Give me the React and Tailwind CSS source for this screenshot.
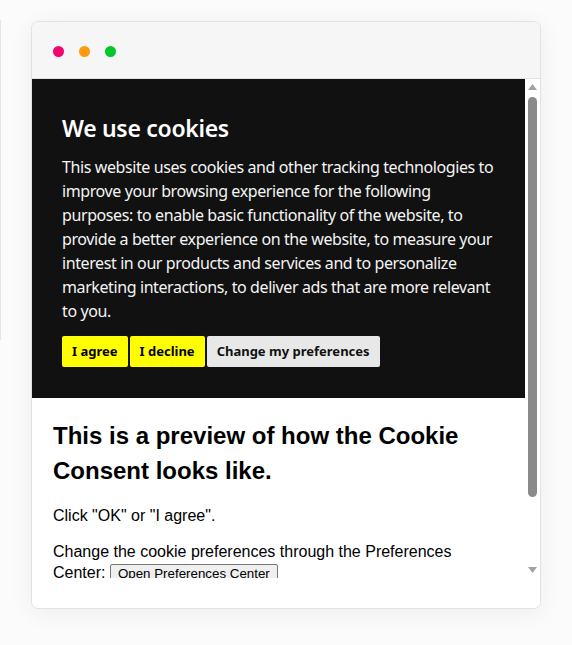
import React from "react";

export default function App() {
  return (
    <div className="w-[572px] h-[645px] bg-[#fbfbfb] relative overflow-hidden">
      <div className="absolute left-0 top-[20px] h-[320px] w-px bg-[#e4e4e4]" />
      <div className="pt-[21px] pl-[31px]">
        <div className="w-[510px] h-[588px] bg-white border border-[#e2e2e2] rounded-[7px] shadow-[0_4px_24px_rgba(0,0,0,0.06)] overflow-hidden flex flex-col">
          <div className="h-[57px] bg-[#f6f6f6] border-b border-[#e0e0e0] flex items-center gap-[15px] pl-[21px] pt-[3px] shrink-0">
            <span className="w-[11px] h-[11px] rounded-full bg-[#f0066c]" />
            <span className="w-[11px] h-[11px] rounded-full bg-[#ff9a10]" />
            <span className="w-[11px] h-[11px] rounded-full bg-[#00c82a]" />
          </div>
          <div className="flex h-[499px] shrink-0">
            <div className="w-[493px] overflow-hidden">
              <div className="bg-[#111111] text-white px-[30px] pt-[30px] pb-[31px]" style={{ fontFamily: '"Noto Sans", sans-serif' }}>
                <h1 className="text-[23px] leading-[38px] font-semibold tracking-[-0.3px] mb-[8px]">We use cookies</h1>
                <p className="text-[16px] leading-[24px] tracking-[-0.4px] text-[#f4f4f4]">
                  This website uses cookies and other tracking technologies to improve your browsing experience for the following purposes: to enable basic functionality of the website, to provide a better experience on the website, to measure your interest in our products and services and to personalize marketing interactions, to deliver ads that are more relevant to you.
                </p>
                <div className="flex gap-[2px] mt-[13px]">
                  <button className="h-[31px] px-[10px] bg-[#ffff00] text-black text-[13px] font-bold rounded-[2px]">I agree</button>
                  <button className="h-[31px] px-[10px] bg-[#ffff00] text-black text-[13px] font-bold rounded-[2px]">I decline</button>
                  <button className="h-[31px] px-[10px] bg-[#e8e8e8] text-[#111] text-[13px] font-bold rounded-[2px]">Change my preferences</button>
                </div>
              </div>
              <div className="px-[21px] pt-[20px] text-black" style={{ fontFamily: '"Liberation Sans", Arial, sans-serif' }}>
                <h2 className="text-[24px] leading-[35px] font-bold">This is a preview of how the Cookie Consent looks like.</h2>
                <p className="text-[16px] leading-[22px] mt-[17px]">Click "OK" or "I agree".</p>
                <p className="text-[16px] leading-[21px] mt-[14px]">
                  Change the cookie preferences through the Preferences Center:{" "}
                  <button className="text-[13.33px] leading-[15px] px-[7px] py-[1px] border border-[#767676] bg-[#efefef] rounded-[2px] align-baseline">Open Preferences Center</button>
                </p>
              </div>
            </div>
            <div className="w-[15px] bg-white flex flex-col items-center">
              <svg width="9" height="6" viewBox="0 0 9 6" className="mt-[5px]"><path d="M4.5 0L9 6H0z" fill="#a3a3a3" /></svg>
              <div className="w-[9px] h-[400px] bg-[#8a8a8a] rounded-full mt-[7px]" />
              <div className="flex-1" />
              <svg width="9" height="6" viewBox="0 0 9 6" className="mb-[5px]"><path d="M0 0h9L4.5 6z" fill="#a3a3a3" /></svg>
            </div>
          </div>
        </div>
      </div>
    </div>
  );
}
